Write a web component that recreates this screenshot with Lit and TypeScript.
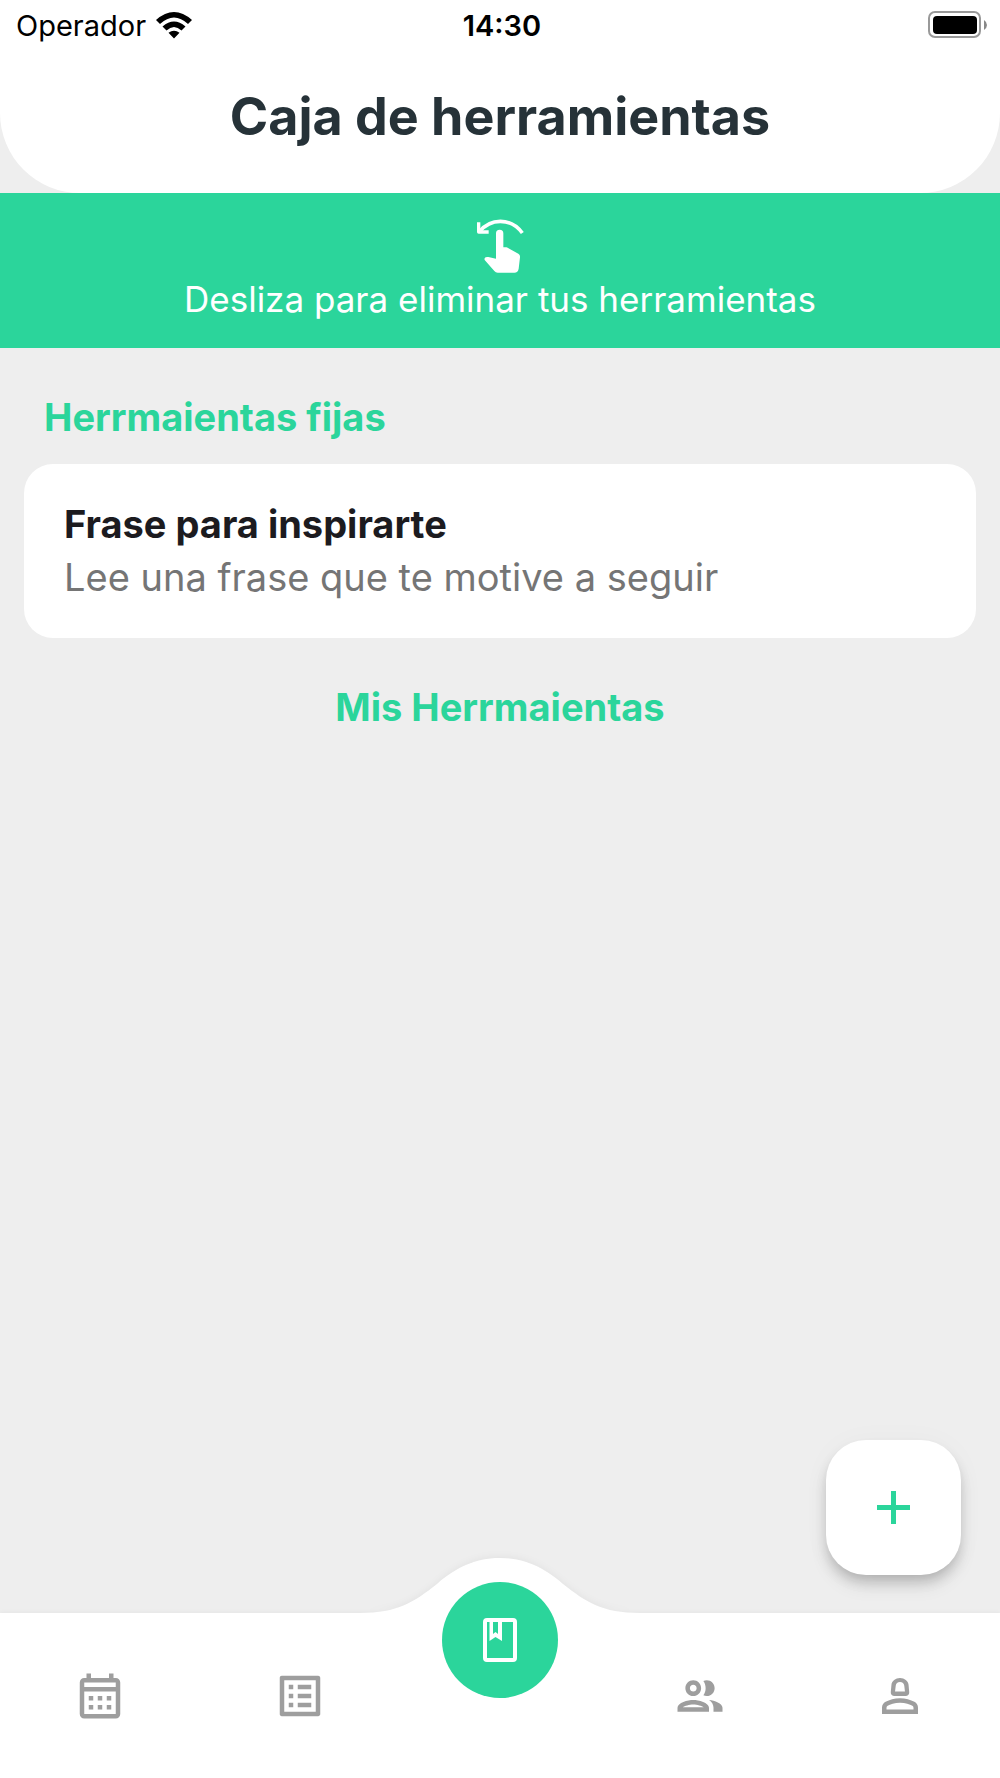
import { LitElement, html, css, svg } from "lit";
import { customElement } from "lit/decorators.js";

const navIcons = {
  calendar: svg`<path d="M19 4h-1V2h-2v2H8V2H6v2H5c-1.110 0-1.990.9-1.990 2L3 20c0 1.100.89 2 2 2h14c1.100 0 2-.9 2-2V6c0-1.100-.9-2-2-2zm0 16H5V10h14v10zm0-12H5V6h14v2zM9 14H7v-2h2v2zm4 0h-2v-2h2v2zm4 0h-2v-2h2v2zm-8 4H7v-2h2v2zm4 0h-2v-2h2v2zm4 0h-2v-2h2v2z"/>`,
  list: svg`<path d="M19 5v14H5V5h14m1.100-2H3.900c-.5 0-.9.4-.9.9v16.200c0 .4.4.9.9.9h16.200c.4 0 .9-.5.9-.9V3.900c0-.5-.5-.9-.9-.9zM11 7h6v2h-6V7zm0 4h6v2h-6v-2zm0 4h6v2h-6v-2zM7 7h2v2H7V7zm0 4h2v2H7v-2zm0 4h2v2H7v-2z"/>`,
  people: svg`<path d="M9 13.75c-2.34 0-7 1.17-7 3.5V19h14v-1.75c0-2.33-4.66-3.5-7-3.5zM4.34 17c.84-.58 2.87-1.25 4.66-1.25s3.82.67 4.66 1.25H4.34zM9 12c1.93 0 3.5-1.57 3.5-3.5S10.93 5 9 5 5.5 6.57 5.5 8.5 7.07 12 9 12zm0-5c.83 0 1.5.67 1.5 1.5S9.83 10 9 10s-1.5-.67-1.5-1.5S8.17 7 9 7zm7.04 6.81c1.16.84 1.96 1.96 1.96 3.44V19h4v-1.75c0-2.02-3.5-3.17-5.96-3.44zM15 12c1.93 0 3.5-1.57 3.5-3.5S16.93 5 15 5c-.54 0-1.04.13-1.5.35.63.89 1 1.98 1 3.15s-.37 2.26-1 3.15c.46.22.96.35 1.5.35z"/>`,
  person: svg`<path fill-rule="evenodd" d="M9.500 12h5c.9 0 1.700-.8 1.600-1.700L15.800 7C15.600 5.300 14 4 12 4S8.400 5.300 8.200 7L7.900 10.300C7.800 11.200 8.600 12 9.500 12zM12 5.800c1.100 0 1.800.7 1.900 1.600L14.200 10H9.800l.3-2.600C10.200 6.500 10.900 5.800 12 5.800zM18.400 14.600C16.700 13.700 14.500 13 12 13s-4.700.7-6.400 1.600C4.600 15.100 4 16.100 4 17.200V20h16v-2.800c0-1.100-.6-2.100-1.600-2.600zM18 18H6v-.8c0-.4.200-.7.500-.9C7.600 15.700 9.600 15 12 15s4.400.7 5.500 1.300c.3.200.5.500.5.900V18z"/>`,
};

@customElement("app-root")
export class AppRoot extends LitElement {
  static styles = css`
    :host {
      display: flex;
      flex-direction: column;
      min-height: 100vh;
      background: #eeeeee;
      font-family: Inter, "Liberation Sans", sans-serif;
      --accent: #2bd59b;
    }
    h1, h2, p { margin: 0; }
    .top {
      background: #fff;
      border-radius: 0 0 80px 80px;
      padding-bottom: 46px;
    }
    .status {
      display: grid;
      grid-template-columns: 1fr auto 1fr;
      align-items: center;
      height: 50px;
      padding: 0 12px 0 16px;
      font-size: 29px;
      color: #000;
    }
    .carrier { display: flex; align-items: center; gap: 10px; }
    .clock { font-weight: 600; }
    .battery { justify-self: end; }
    .status svg { display: block; }
    h1 {
      margin-top: 36px;
      text-align: center;
      font-size: 52px;
      line-height: 61px;
      font-weight: 700;
      color: #263238;
    }
    .banner {
      display: flex;
      flex-direction: column;
      align-items: center;
      gap: 4px;
      padding: 26px 24px 28px;
      background: var(--accent);
      color: #fff;
      font-size: 35px;
      line-height: 42px;
      font-weight: 400;
    }
    main {
      flex: 1;
      display: flex;
      flex-direction: column;
      padding: 47px 24px 38px;
    }
    h2 {
      font-size: 38px;
      line-height: 44px;
      font-weight: 700;
      color: var(--accent);
    }
    .fixed { padding: 0 20px; }
    .mine { text-align: center; margin-top: 47px; }
    .card {
      margin-top: 25px;
      padding: 34px 40px;
      border: 0;
      border-radius: 29px;
      background: #fff;
      text-align: left;
      font: inherit;
      font-size: 38px;
      line-height: 53px;
      color: #757575;
      cursor: pointer;
    }
    .name { display: block; font-weight: 700; color: #1c1b1f; }
    .detail { display: block; }
    .add {
      display: grid;
      place-items: center;
      width: 135px;
      height: 135px;
      margin: auto 15px 0 auto;
      padding: 0;
      border: 0;
      border-radius: 40px;
      background: #fff;
      color: var(--accent);
      box-shadow: 0 8px 13px -3px rgba(0, 0, 0, 0.2), 0 12px 18px rgba(0, 0, 0, 0.08), 0 2px 30px rgba(0, 0, 0, 0.03);
      cursor: pointer;
    }
    nav {
      position: relative;
      display: grid;
      grid-template-columns: repeat(5, 1fr);
      height: 165px;
      background: #fff;
      box-shadow: 0 -1px 4px rgba(0, 0, 0, 0.04);
    }
    .bump {
      position: absolute;
      left: 50%;
      bottom: 100%;
      margin-left: -140px;
      display: block;
      overflow: visible;
      filter: drop-shadow(0 -2px 3px rgba(0, 0, 0, 0.04));
      clip-path: inset(-10px 0 0 0);
    }
    .tab {
      display: grid;
      justify-items: center;
      align-items: center;
      color: #9e9e9e;
    }
    .tab svg, .current svg, .add svg { display: block; fill: currentColor; }
    .current {
      position: absolute;
      left: 50%;
      top: -31px;
      display: grid;
      place-items: center;
      width: 116px;
      height: 116px;
      margin-left: -58px;
      border-radius: 50%;
      background: var(--accent);
      color: #fff;
    }
  `;

  private tab(icon: keyof typeof navIcons, label: string) {
    return html`<a class="tab" href="#${icon}" aria-label=${label}>
      <svg width="54" height="54" viewBox="0 0 24 24">${navIcons[icon]}</svg>
    </a>`;
  }

  render() {
    return html`
      <header class="top">
        <div class="status">
          <div class="carrier">
            <span>Operador</span>
            <svg width="36" height="27" viewBox="0 0 36 27">
              <path d="M0 8Q18-8 36 8L32 12Q18-1 4 12Z M6.500 14.500Q18 4.500 29.500 14.500L25.500 18.500Q18 11.500 10.500 18.500Z M12.500 20.800Q18 16.600 23.500 20.800L18 26.500Z"/>
            </svg>
          </div>
          <span class="clock">14:30</span>
          <svg class="battery" width="60" height="28" viewBox="0 0 60 28">
            <rect x="1" y="1" width="51" height="25" rx="6" fill="none" stroke="#999" stroke-width="2"/>
            <rect x="5" y="5" width="44" height="18" rx="4"/>
            <path d="M56 9q3 2 3 5t-3 5z" fill="#888"/>
          </svg>
        </div>
        <h1>Caja de herramientas</h1>
      </header>
      <div class="banner">
        <svg width="48" height="55" viewBox="48 28 144 165" fill="none" stroke="#fff">
          <path d="M58 66Q84 35 121 35 161 35 187 70" stroke-width="11"/>
          <path d="M56 38V67H86" stroke-width="10" stroke-linejoin="round"/>
          <path fill="#fff" stroke="none" d="M108 71a11 11 0 0 1 22 0v42h9q3 0 5 2l31 17q6 4 5 11l-4 34q-2 12-13 12H113q-6 0-10-5L74 151q-2-5 3-8 4-2 8-1l23 5z"/>
        </svg>
        <p>Desliza para eliminar tus herramientas</p>
      </div>
      <main>
        <h2 class="fixed">Herrmaientas fijas</h2>
        <button class="card" type="button">
          <span class="name">Frase para inspirarte</span>
          <span class="detail">Lee una frase que te motive a seguir</span>
        </button>
        <h2 class="mine">Mis Herrmaientas</h2>
        <button class="add" type="button" aria-label="Añadir herramienta">
          <svg width="33" height="33" viewBox="0 0 33 33"><path d="M14 0h5v14h14v5H19v14h-5V19H0v-5h14z"/></svg>
        </button>
      </main>
      <nav>
        <svg class="bump" width="280" height="56" viewBox="0 0 280 56">
          <path fill="#fff" d="M0 56C38 56 54 45 77 27 95 11 115 1 140 1S185 11 203 27C226 45 242 56 280 56Z"/>
        </svg>
        ${this.tab("calendar", "Calendario")}
        ${this.tab("list", "Lista")}
        <span></span>
        ${this.tab("people", "Comunidad")}
        ${this.tab("person", "Perfil")}
        <a class="current" href="#tools" aria-label="Caja de herramientas" aria-current="page">
          <svg width="34" height="44" viewBox="0 0 34 44">
            <path fill-rule="evenodd" d="M4 0H30q4 0 4 4V40q0 4-4 4H4q-4 0-4-4V4Q0 0 4 0ZM4 4V40H30V4H19V23L12.500 19 6.500 23V4ZM10 4V16L12.500 14 15 16V4Z"/>
          </svg>
        </a>
      </nav>
    `;
  }
}
